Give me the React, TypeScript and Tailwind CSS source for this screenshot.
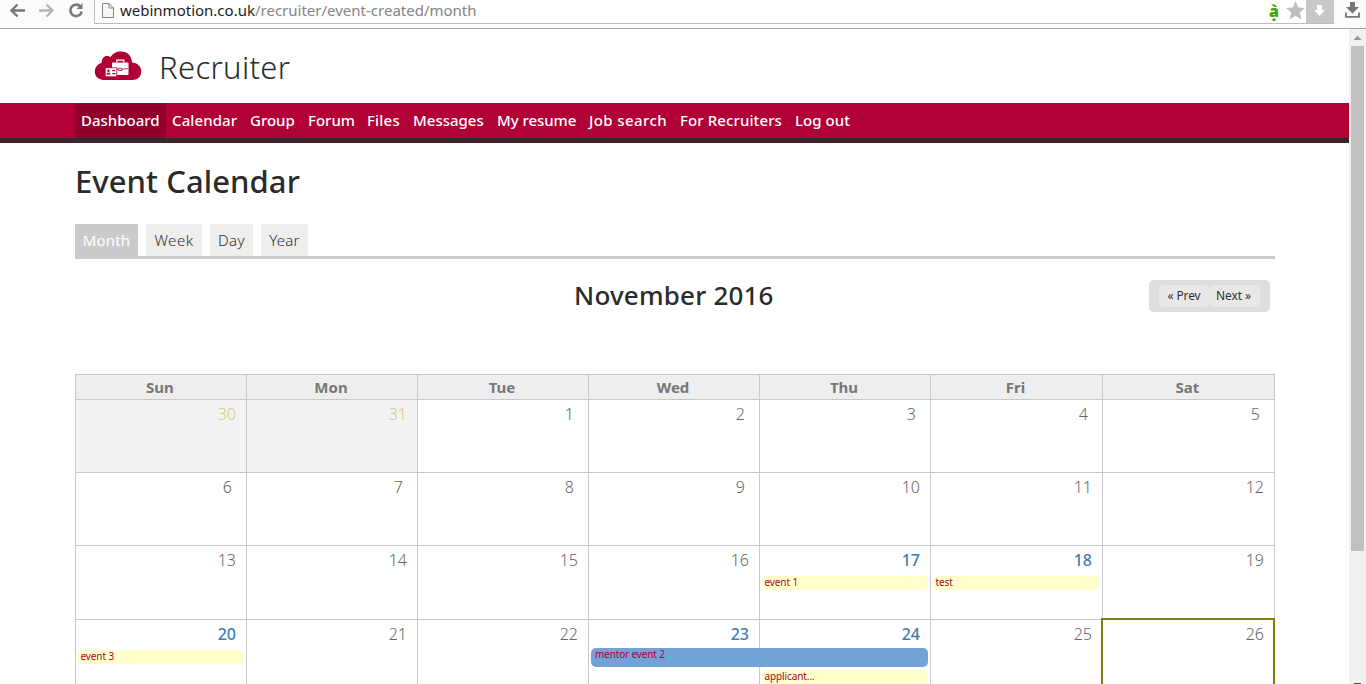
import React from "react";

type NavItem = { label: string; width: string; spacing: string };

const navItems: NavItem[] = [
  { label: "Dashboard", width: "w-[91px]", spacing: "tracking-[0px]" },
  { label: "Calendar", width: "w-[78px]", spacing: "tracking-[0.1px]" },
  { label: "Group", width: "w-[58px]", spacing: "tracking-[0px]" },
  { label: "Forum", width: "w-[59px]", spacing: "tracking-[0px]" },
  { label: "Files", width: "w-[46px]", spacing: "tracking-[0.2px]" },
  { label: "Messages", width: "w-[84px]", spacing: "tracking-[0px]" },
  { label: "My resume", width: "w-[92px]", spacing: "tracking-[-0.05px]" },
  { label: "Job search", width: "w-[91px]", spacing: "tracking-[0.4px]" },
  { label: "For Recruiters", width: "w-[115px]", spacing: "tracking-[0.1px]" },
  { label: "Log out", width: "w-[68px]", spacing: "tracking-[0.05px]" },
];

const tabs = [
  { label: "Month", width: "w-[63px]", spacing: "tracking-[0.2px]", active: true },
  { label: "Week", width: "w-[56px]", spacing: "tracking-[0.5px]", active: false },
  { label: "Day", width: "w-[43px]", spacing: "tracking-[0.4px]", active: false },
  { label: "Year", width: "w-[47px]", spacing: "tracking-[0.2px]", active: false },
];

const columns = "grid grid-cols-[171px_171px_171px_171px_171px_172px_172px]";

type Day = { n: number; other?: boolean; busy?: boolean; today?: boolean; event?: string; span?: string };

const weeks: { height: string; days: Day[] }[] = [
  {
    height: "h-[73px]",
    days: [{ n: 30, other: true }, { n: 31, other: true }, { n: 1 }, { n: 2 }, { n: 3 }, { n: 4 }, { n: 5 }],
  },
  { height: "h-[73px]", days: [{ n: 6 }, { n: 7 }, { n: 8 }, { n: 9 }, { n: 10 }, { n: 11 }, { n: 12 }] },
  {
    height: "h-[74px]",
    days: [
      { n: 13 }, { n: 14 }, { n: 15 }, { n: 16 },
      { n: 17, busy: true, event: "event 1" },
      { n: 18, busy: true, event: "test" },
      { n: 19 },
    ],
  },
  {
    height: "h-[74px]",
    days: [
      { n: 20, busy: true, event: "event 3" },
      { n: 21 }, { n: 22 },
      { n: 23, busy: true, span: "mentor event 2" },
      { n: 24, busy: true, event: "applicant..." },
      { n: 25 },
      { n: 26, today: true },
    ],
  },
];

function BrowserBar() {
  return (
    <div className="flex h-[29px] shrink-0 items-start border-b border-[#a5a5a5] bg-[#fbfbfb]">
      <svg className="h-[24px] w-[94px] shrink-0" viewBox="0 0 94 24" fill="none">
        <path d="M25 10.500H12M17.500 4.500l-6 6 6 6" stroke="#777" strokeWidth="2.400" />
        <path d="M39 10.500h13M46.500 4.500l6 6-6 6" stroke="#b5b5b5" strokeWidth="2.400" />
        <path d="M80.300 6.500A5.700 5.700 0 1 0 81.700 11.500" stroke="#7a7a7a" strokeWidth="2.600" />
        <path d="M82.500 3v6h-6z" fill="#7a7a7a" />
      </svg>
      <div className="flex h-[24px] flex-1 border-b border-l border-[#bdbdbd] bg-white">
        <svg className="ml-[7px] mt-[2px] h-[17px] w-[12px] shrink-0" viewBox="0 0 12 17">
          <path d="M.5 1.500h6.500l4.500 4.500v9.500H.5z" fill="#f7f7f7" stroke="#858585" />
          <path d="M7 1.500V6h4.500" fill="none" stroke="#858585" />
        </svg>
        <div className="ml-[6px] flex-1 whitespace-nowrap text-[15px] leading-[21px] text-[#858585]">
          <span className="text-[#1d1d1d]">webinmotion.co.uk</span>/recruiter/event-created/month
        </div>
        <span className="mr-[6px] w-[12px] text-center text-[16px] font-black leading-[22px] text-[#35a800]">ạ̀</span>
        <svg className="mt-[1px] h-[19px] w-[19px]" viewBox="0 0 19 19">
          <path d="m9.500 0 2.700 6.600 6.800.5-5.200 4.500 1.700 6.900-6-3.800-6 3.800 1.700-6.900L0 7.100l6.800-.5z" fill="#bdbdbd" />
        </svg>
        <div className="ml-[1px] flex w-[28px] justify-center bg-[#c8c8c8]">
          <svg className="h-[23px] w-[28px]" viewBox="0 0 28 23">
            <path d="M11 5h5v5h3l-5.500 6L8 10h3z" fill="#fff" />
          </svg>
        </div>
      </div>
      <svg className="h-[24px] w-[32px] shrink-0 bg-[#fbfbfb]" viewBox="0 0 32 24">
        <path d="M16 2h5v5h4l-6.500 6.500L12 7h4z" fill="#777" />
        <path d="M12 12.500v4.300h13v-4.300" fill="none" stroke="#777" strokeWidth="1.800" />
      </svg>
    </div>
  );
}

function CloudLogo() {
  return (
    <svg className="h-[30px] w-[48px]" viewBox="0 0 48 30">
      <path
        d="M10 29C4.500 29 .8 25.700.8 20.600c0-4.400 3-7.600 7-8.800C7.500 7.500 10 5 13 5c1.500 0 2.700.5 3.500 1.300C18.500 2.500 22.500.5 27 .5c6.500 0 10.800 4.500 11 11 5 .5 9.300 3.500 9.300 9 0 5.200-4 8.500-9 8.500z"
        fill="#b00035"
      />
      <path d="M22.800 11V9.200h7V11" fill="none" stroke="#fff" strokeWidth="1.300" />
      <rect x="18" y="11.500" width="16.500" height="12.500" rx="1" fill="#fff" />
      <path d="M18.500 17.500l6 .7M34 17.500l-6 .7M24.700 17.300h3v2.200h-3z" fill="none" stroke="#b00035" strokeWidth=".8" />
      <rect x="11.200" y="16.800" width="11.600" height="9" fill="#fff" stroke="#b00035" strokeWidth=".8" />
      <circle cx="14.500" cy="19.700" r="1.200" fill="#b00035" />
      <path d="M12.500 23.500c0-2.700 4-2.700 4 0z" fill="#b00035" />
      <path d="M18.300 19.600h3M18.300 22.600h3" stroke="#b00035" strokeWidth="1.200" />
    </svg>
  );
}

function DayCell({ day }: { day: Day }) {
  const numberTone = day.other
    ? "font-light text-[#cccc80]"
    : day.busy
      ? "font-medium text-[#3c7eae]"
      : "font-light text-[#666]";
  return (
    <div className={`relative border-l border-t border-[#c8c8c8] ${day.other ? "bg-[#f3f3f3]" : ""}`}>
      <div
        className={`pt-[2px] text-right text-[16px] leading-[24px] ${day.n < 10 ? "pr-[14px]" : "pr-[10px]"} ${numberTone}`}
      >
        {day.n}
      </div>
      {day.span && (
        <div className="absolute left-[2px] top-[28px] z-10 h-[19px] w-[337px] rounded-[5px] bg-[#72a3d6] pl-[4px] text-[10px] leading-[13px] tracking-[-0.15px] text-[#b00035]">
          {day.span}
        </div>
      )}
      {day.event && (
        <div
          className={`ml-[2px] mr-[2px] h-[14px] rounded-[5px] bg-[#ffffcc] pl-[2.5px] text-[10px] leading-[13px] tracking-[-0.1px] text-[#b00035] ${
            day.n === 24 ? "mt-[24px]" : "mt-[4px]"
          }`}
        >
          {day.event}
        </div>
      )}
      {day.today && <div className="absolute -left-[2px] -right-px -top-[2px] bottom-0 border-2 border-[#808010]" />}
    </div>
  );
}

export default function App() {
  return (
    <div className="flex h-[684px] w-[1366px] flex-col overflow-hidden bg-white font-['Noto_Sans','Open_Sans',sans-serif]">
      <BrowserBar />
      <div className="flex min-h-0 flex-1">
        <div className="w-[1349px] overflow-hidden">
          <header className="flex h-[74px] pl-[94px]">
            <div className="pt-[22px]"><CloudLogo /></div>
            <div className="ml-[17px] pt-[16px] text-[31px] font-light leading-[44px] tracking-[0.35px] text-[#2b2b2b]">Recruiter</div>
          </header>
          <nav className="flex h-[40px] border-b-[5px] border-[#2d2d2d] bg-[#b00035] pl-[75px]">
            {navItems.map((item, i) => (
              <a
                key={item.label}
                className={`whitespace-nowrap pl-[6px] text-[15px] font-medium leading-[34px] text-white ${item.width} ${item.spacing} ${
                  i === 0 ? "bg-[#90002b]" : ""
                }`}
              >
                {item.label}
              </a>
            ))}
          </nav>
          <main className="ml-[75px] w-[1200px]">
            <h1 className="h-[81px] pt-[16px] text-[31px] font-medium leading-[44px] tracking-[0.07px] text-[#2b2b2b]">Event Calendar</h1>
            <div className="flex h-[35px] gap-2 border-b-[3px] border-[#cbcbcb]">
              {tabs.map((tab) => (
                <div
                  key={tab.label}
                  className={`text-center text-[15px] leading-[33px] ${tab.width} ${tab.spacing} ${
                    tab.active ? "bg-[#cbcbcb] text-white" : "bg-[#eee] font-light text-[#333]"
                  }`}
                >
                  {tab.label}
                </div>
              ))}
            </div>
            <div className="flex h-[115px] items-start pt-[21px]">
              <h2 className="-mt-px ml-[499px] w-[575px] whitespace-nowrap text-[26px] font-medium leading-[32px] tracking-[0.2px] text-[#2b2b2b]">
                November 2016
              </h2>
              <div className="flex h-[32px] w-[121px] rounded-[5px] bg-[#dedede] px-[10px] py-[5px] text-[12px] leading-[22px] tracking-[-0.1px] text-[#333]">
                <span className="w-[50px] rounded-[5px] bg-[#e8e8e8] text-center">« Prev</span>
                <span className="w-[51px] rounded-[5px] bg-[#e8e8e8] pr-[2px] text-center">Next »</span>
              </div>
            </div>
            <div className="w-[1200px] border-r border-[#c8c8c8]">
              <div className={`${columns} h-[25px] border-t border-[#c8c8c8] bg-[#eee]`}>
                {["Sun", "Mon", "Tue", "Wed", "Thu", "Fri", "Sat"].map((d) => (
                  <div
                    key={d}
                    className="border-l border-[#c8c8c8] pr-[2px] text-center text-[15px] font-bold leading-[25px] text-[#777]"
                  >
                    {d}
                  </div>
                ))}
              </div>
              {weeks.map((week, i) => (
                <div key={i} className={`${columns} ${week.height}`}>
                  {week.days.map((day) => (
                    <DayCell key={day.n} day={day} />
                  ))}
                </div>
              ))}
            </div>
          </main>
        </div>
        <aside className="flex w-[17px] flex-col items-center bg-[#f1f1f1]">
          <svg className="h-[17px] w-[17px] shrink-0" viewBox="0 0 17 17">
            <path d="M4.500 11h8l-4-4.500z" fill="#999" />
          </svg>
          <div className="h-[505px] w-[13px] shrink-0 bg-[#c1c1c1]" />
          <div className="mt-auto h-px w-[7px] bg-[#505050]" />
        </aside>
      </div>
    </div>
  );
}
